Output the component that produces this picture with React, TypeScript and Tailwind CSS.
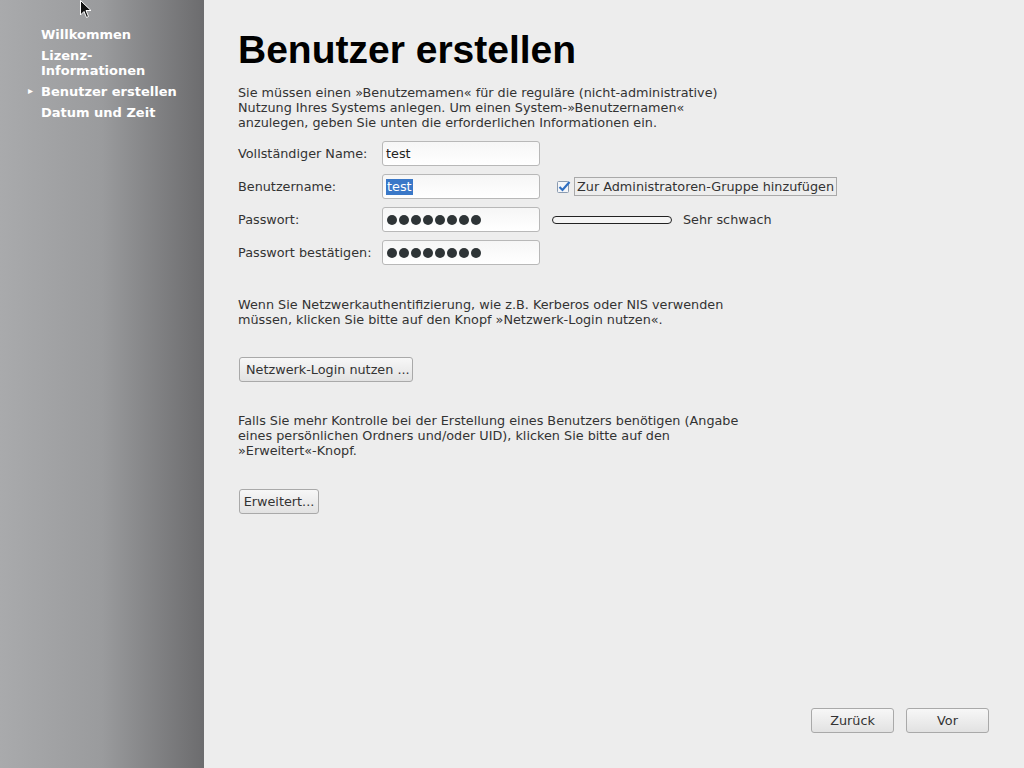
import type { FC, ReactNode } from "react";

const font = { fontFamily: '"DejaVu Sans", sans-serif' };

const Field: FC<{ label: string; children: ReactNode; extra?: ReactNode }> = ({ label, children, extra }) => (
  <div className="flex items-center h-[25px]">
    <span className="w-[144px] text-[12.8px] text-[#333]">{label}</span>
    <div className="w-[158px] h-[25px] rounded-[3px] border border-[#b8b8b8] bg-gradient-to-b from-[#f6f6f6] to-white flex items-center px-[3px] text-[12.8px] text-[#222]">
      {children}
    </div>
    {extra}
  </div>
);

const Dots = () => (
  <div className="flex gap-[2px] ml-[1px]">
    {Array.from({ length: 8 }).map((_, i) => (
      <span key={i} className="w-[10px] h-[10px] rounded-full bg-[#2e3436]" />
    ))}
  </div>
);

const Button: FC<{ children: ReactNode; className?: string }> = ({ children, className = "" }) => (
  <button
    className={`h-[25px] rounded-[3px] border border-[#a9a9a9] bg-gradient-to-b from-[#f7f7f7] to-[#e2e2e2] text-[12.8px] text-[#333] whitespace-nowrap ${className}`}
  >
    {children}
  </button>
);

const App: FC = () => {
  return (
    <div className="w-[1024px] h-[768px] flex bg-[#ededed] relative overflow-hidden" style={font}>
      {/* sidebar */}
      <aside className="w-[204px] shrink-0 bg-gradient-to-r from-[#a9aaac] via-[#9a9b9d] to-[#6c6c6e] pt-[27px] pl-[41px] text-white font-bold text-[13px] leading-[15px]">
        <div className="h-[21px]">Willkommen</div>
        <div>Lizenz-</div>
        <div className="h-[21px]">Informationen</div>
        <div className="h-[21px] relative">
          <span className="absolute left-[-13px] top-[-1px] text-[10px]">▸</span>
          Benutzer erstellen
        </div>
        <div className="h-[21px]">Datum und Zeit</div>
      </aside>

      {/* content */}
      <main className="flex-1 pl-[34px] pt-[27px] pr-[35px] flex flex-col text-[#333]">
        <h1
          className="text-[39px] leading-[46px] font-bold text-black"
          style={{ fontFamily: '"Liberation Sans", Arial, sans-serif' }}
        >
          Benutzer erstellen
        </h1>
        <p className="mt-[12px] text-[12.8px] leading-[15px] w-[505px]">
          Sie müssen einen »Benutzemamen« für die reguläre (nicht-administrative) Nutzung Ihres Systems anlegen. Um einen System-»Benutzernamen« anzulegen, geben Sie unten die erforderlichen Informationen ein.
        </p>

        <div className="mt-[11px] flex flex-col gap-[8px]">
          <Field label="Vollständiger Name:">test</Field>
          <Field
            label="Benutzername:"
            extra={
              <div className="flex items-center ml-[17px]">
                <svg width="14" height="13" viewBox="0 0 14 13">
                  <rect x="0.5" y="1.5" width="11" height="11" rx="1" fill="#f4f6f9" stroke="#8a9bb0" />
                  <path d="M2.5 7 L5.5 10 L12.5 2" fill="none" stroke="#2f6fc2" strokeWidth="2.2" />
                </svg>
                <span className="ml-[3px] border border-[#a9a9a9] px-[2px] h-[19px] flex items-center text-[12.8px] text-[#333]">
                  Zur Administratoren-Gruppe hinzufügen
                </span>
              </div>
            }
          >
            <span className="bg-[#3a78c8] text-white px-[1px] leading-[16px]">test</span>
          </Field>
          <Field
            label="Passwort:"
            extra={
              <div className="flex items-center ml-[12px]">
                <div className="w-[120px] h-[8px] rounded-[4px] border border-[#222] bg-[#f4f4f4]" />
                <span className="ml-[11px] text-[12.8px]">Sehr schwach</span>
              </div>
            }
          >
            <Dots />
          </Field>
          <Field label="Passwort bestätigen:">
            <Dots />
          </Field>
        </div>

        <p className="mt-[32px] text-[12.8px] leading-[15px] w-[505px]">
          Wenn Sie Netzwerkauthentifizierung, wie z.B. Kerberos oder NIS verwenden müssen, klicken Sie bitte auf den Knopf »Netzwerk-Login nutzen«.
        </p>
        <div className="mt-[30px]">
          <Button className="ml-[1px] px-[6px] w-[174px]">Netzwerk-Login nutzen ...</Button>
        </div>

        <p className="mt-[31px] text-[12.8px] leading-[15px] w-[505px]">
          Falls Sie mehr Kontrolle bei der Erstellung eines Benutzers benötigen (Angabe eines persönlichen Ordners und/oder UID), klicken Sie bitte auf den »Erweitert«-Knopf.
        </p>
        <div className="mt-[31px]">
          <Button className="ml-[1px] w-[80px]">Erweitert...</Button>
        </div>

        <div className="mt-auto mb-[35px] flex justify-end gap-[12px]">
          <Button className="w-[83px]">Zurück</Button>
          <Button className="w-[83px]">Vor</Button>
        </div>
      </main>

      {/* mouse pointer */}
      <svg className="absolute left-[80px] top-0" width="12" height="19" viewBox="0 0 12 19">
        <path d="M0.5 0.5 L0.5 15 L4 11.5 L6.5 17.5 L8.5 16.5 L6 10.5 L11 10.5 Z" fill="#111" stroke="#fff" strokeWidth="1" />
      </svg>
    </div>
  );
};

export default App;
